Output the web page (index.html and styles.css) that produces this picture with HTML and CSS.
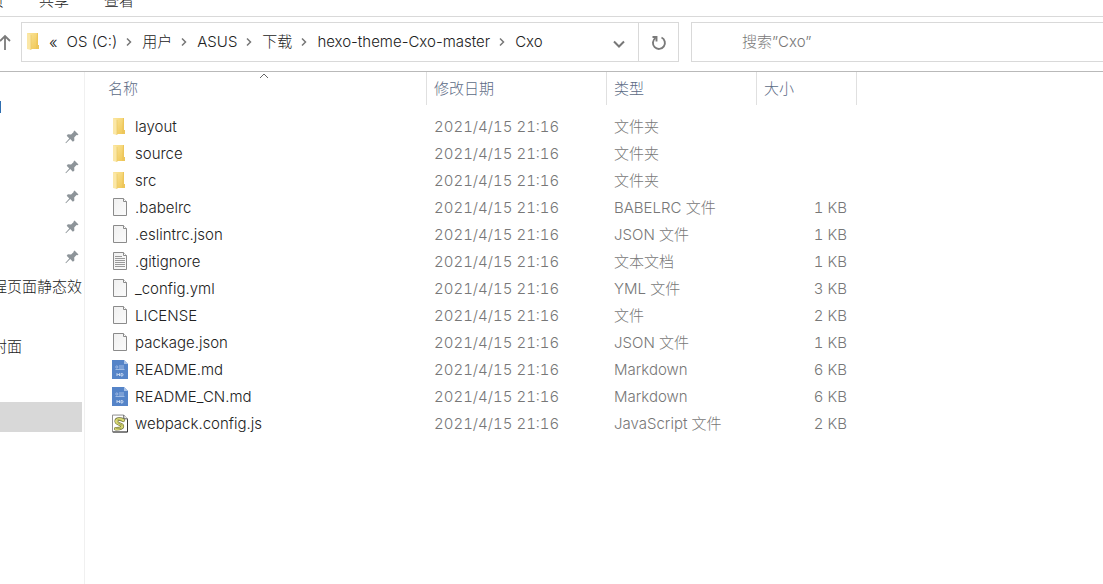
FILE: index.html
```html
<!DOCTYPE html>
<html lang="zh-CN">
<head>
<meta charset="utf-8">
<title>Cxo</title>
<link rel="stylesheet" href="styles.css">
</head>
<body>
<svg class="defs" aria-hidden="true">
  <defs>
    <linearGradient id="gold" x1="0" y1="0" x2="1" y2="1"><stop offset="0" stop-color="#fbe59a"/><stop offset="1" stop-color="#efc653"/></linearGradient>
    <linearGradient id="paper" x1="0" y1="0" x2="1" y2="1"><stop offset="0" stop-color="#f0f0f0"/><stop offset="1" stop-color="#fbfbfb"/></linearGradient>
  </defs>
  <symbol id="folder" viewBox="0 0 16 20">
    <path d="M1 1h11v12l1 1v3H2z" fill="url(#gold)"/>
    <path d="M1 1l4 2v15l-4-1z" fill="#fbe7a6"/>
    <path d="M5 3v15" stroke="#e9c866" stroke-width=".7"/>
    <path d="M11 1h1v12h1v4h-3z" fill="#edc65b"/>
  </symbol>
  <symbol id="file" viewBox="0 0 16 20">
    <path d="M1.500.500h10l3 3v14h-13z" fill="url(#paper)" stroke="#8b8b8b"/>
    <path d="M11.500.500v3h3" fill="#fff" stroke="#8b8b8b"/>
  </symbol>
  <symbol id="text" viewBox="0 0 16 20">
    <use href="#file"/>
    <path d="M3 4.500h7M3 6.500h10M3 8.500h10M3 10.500h10M3 12.500h10M3 14.500h10" stroke="#9a9a9a"/>
  </symbol>
  <symbol id="md" viewBox="0 0 16 20">
    <path d="M0 0h12l4 4v15H0z" fill="#5584c8"/>
    <path d="M12 0l4 4h-4z" fill="#a9c2e6"/>
    <path d="M7 6h5M3.500 9.500h9M7 8h5" stroke="#b4caeb" stroke-width=".8"/>
    <circle cx="4.800" cy="7" r="1.100" fill="none" stroke="#b4caeb" stroke-width=".7"/>
    <path d="M5 16v-2.500l1.200 1.500 1.300-1.500V16M9 13.500V16h.8a1.250 1.250 0 0 0 0-2.500z" fill="none" stroke="#d5e2f5" stroke-width=".9"/>
  </symbol>
  <symbol id="script" viewBox="0 0 17 20">
    <path d="M.5.500h12l4 4v14H.5z" fill="#fff" stroke="#888"/>
    <path d="M12.500.500v4h4" fill="#eee" stroke="#555"/>
    <path d="M16.500 5v13.500H1" fill="none" stroke="#333"/>
    <path d="M12 6C10 4.500 4.500 4 4.500 7.200s7 2.600 6.500 5.300-4 2.500-7 2.500" fill="none" stroke="#66673a" stroke-width="3.800" stroke-linecap="round"/>
    <path d="M12 6C10 4.500 4.500 4 4.500 7.200s7 2.600 6.500 5.300-4 2.500-7 2.500" fill="none" stroke="#d9da73" stroke-width="2.600" stroke-linecap="round"/>
    <path d="M6 5.500l4 .8M6 8.500l5 3M4 14.500h6" stroke="#8b8c45" stroke-width=".8"/>
  </symbol>
  <symbol id="pin" viewBox="0 0 14 14">
    <path d="M9.500.500l4 4-1.200.8-.8-.2-2.300 2.500.2 3-1.500 1.200-2.700-2.700L1 13.300l-.6-.5 3.900-4.400L1.700 5.700l1.200-1.500 3.200.2 2.600-2.300-.1-.9z" fill="#8d9499"/>
  </symbol>
  <symbol id="sep" viewBox="0 0 6 10"><path d="M1 1.500L4.500 5 1 8.500" fill="none" stroke="#777" stroke-width="1.500"/></symbol>
</svg>

<nav class="ribbon">
  <a class="tab tab-cut" href="#">主页</a>
  <a class="tab" href="#">共享</a>
  <a class="tab" href="#">查看</a>
</nav>

<header class="toolbar">
  <button class="up" aria-label="上移"><svg width="12" height="18" viewBox="0 0 12 18"><path d="M5 16V2M0 7l5-5 5 5" fill="none" stroke="#7a7a7a" stroke-width="1.800"/></svg></button>
  <div class="address">
    <svg class="address-icon" width="16" height="20"><use href="#folder"/></svg>
    <nav class="crumbs">
      <span class="more">«</span>
      <a href="#">OS (C:)</a><svg width="6" height="10"><use href="#sep"/></svg>
      <a href="#">用户</a><svg width="6" height="10"><use href="#sep"/></svg>
      <a href="#">ASUS</a><svg width="6" height="10"><use href="#sep"/></svg>
      <a href="#">下载</a><svg width="6" height="10"><use href="#sep"/></svg>
      <a href="#">hexo-theme-Cxo-master</a><svg width="6" height="10"><use href="#sep"/></svg>
      <a href="#">Cxo</a>
    </nav>
    <button class="history" aria-label="以前的位置"><svg width="12" height="8" viewBox="0 0 12 8"><path d="M1 1.500l5 5 5-5" fill="none" stroke="#777" stroke-width="2"/></svg></button>
    <button class="refresh" aria-label="刷新"><svg width="16" height="16" viewBox="0 0 16 16"><path d="M10.500 2.500A6 6 0 1 1 4.500 3" fill="none" stroke="#7a7a7a" stroke-width="1.900"/><path d="M1.500 2H5.500V6.500" fill="none" stroke="#7a7a7a" stroke-width="1.900"/></svg></button>
  </div>
  <input class="search" type="text" aria-label="搜索" placeholder="搜索”Cxo”">
</header>

<div class="content">
  <aside class="sidebar">
    <div class="side-item"><span class="marker"></span></div>
    <div class="side-item pinned"><svg width="14" height="14"><use href="#pin"/></svg></div>
    <div class="side-item pinned"><svg width="14" height="14"><use href="#pin"/></svg></div>
    <div class="side-item pinned"><svg width="14" height="14"><use href="#pin"/></svg></div>
    <div class="side-item pinned"><svg width="14" height="14"><use href="#pin"/></svg></div>
    <div class="side-item pinned"><svg width="14" height="14"><use href="#pin"/></svg></div>
    <div class="side-item"><span class="label">程页面静态效</span></div>
    <div class="side-item"></div>
    <div class="side-item"><span class="label">封面</span></div>
    <div class="side-item"></div>
    <div class="side-item selected"></div>
  </aside>
  <main class="files">
    <table>
      <colgroup><col class="c-name"><col class="c-date"><col class="c-type"><col class="c-size"></colgroup>
      <thead>
        <tr>
          <th class="sorted">名称<svg class="sort" width="10" height="6" viewBox="0 0 10 6"><path d="M1 5l4-4 4 4" fill="none" stroke="#666"/></svg></th>
          <th>修改日期</th><th>类型</th><th>大小</th>
        </tr>
      </thead>
      <tbody>
        <tr><td><span class="name"><svg width="16" height="20"><use href="#folder"/></svg>layout</span></td><td class="date">2021/4/15 21:16</td><td>文件夹</td><td></td></tr>
        <tr><td><span class="name"><svg width="16" height="20"><use href="#folder"/></svg>source</span></td><td class="date">2021/4/15 21:16</td><td>文件夹</td><td></td></tr>
        <tr><td><span class="name"><svg width="16" height="20"><use href="#folder"/></svg>src</span></td><td class="date">2021/4/15 21:16</td><td>文件夹</td><td></td></tr>
        <tr><td><span class="name"><svg width="16" height="20"><use href="#file"/></svg>.babelrc</span></td><td class="date">2021/4/15 21:16</td><td>BABELRC 文件</td><td>1 KB</td></tr>
        <tr><td><span class="name"><svg width="16" height="20"><use href="#file"/></svg>.eslintrc.json</span></td><td class="date">2021/4/15 21:16</td><td>JSON 文件</td><td>1 KB</td></tr>
        <tr><td><span class="name"><svg width="16" height="20"><use href="#text"/></svg>.gitignore</span></td><td class="date">2021/4/15 21:16</td><td>文本文档</td><td>1 KB</td></tr>
        <tr><td><span class="name"><svg width="16" height="20"><use href="#file"/></svg>_config.yml</span></td><td class="date">2021/4/15 21:16</td><td>YML 文件</td><td>3 KB</td></tr>
        <tr><td><span class="name"><svg width="16" height="20"><use href="#file"/></svg>LICENSE</span></td><td class="date">2021/4/15 21:16</td><td>文件</td><td>2 KB</td></tr>
        <tr><td><span class="name"><svg width="16" height="20"><use href="#file"/></svg>package.json</span></td><td class="date">2021/4/15 21:16</td><td>JSON 文件</td><td>1 KB</td></tr>
        <tr><td><span class="name"><svg width="16" height="20"><use href="#md"/></svg>README.md</span></td><td class="date">2021/4/15 21:16</td><td>Markdown</td><td>6 KB</td></tr>
        <tr><td><span class="name"><svg width="16" height="20"><use href="#md"/></svg>README_CN.md</span></td><td class="date">2021/4/15 21:16</td><td>Markdown</td><td>6 KB</td></tr>
        <tr><td><span class="name"><svg width="16" height="20"><use href="#script"/></svg>webpack.config.js</span></td><td class="date">2021/4/15 21:16</td><td>JavaScript 文件</td><td>2 KB</td></tr>
      </tbody>
    </table>
  </main>
</div>
</body>
</html>
```

FILE: styles.css
```css
* { box-sizing: border-box; }
body {
  margin: 0;
  min-height: 100vh;
  display: flex;
  flex-direction: column;
  background: #fff;
  color: #222;
  font: 300 15px/20px Inter, "Noto Sans CJK SC", sans-serif;
  overflow: hidden;
}
svg { flex: none; display: block; }
.defs { position: absolute; width: 0; height: 0; }
a { color: inherit; text-decoration: none; }
button { border: 0; padding: 0; background: none; display: flex; align-items: center; justify-content: center; }

.ribbon {
  display: flex;
  align-items: flex-end;
  gap: 35px;
  height: 17px;
  padding-bottom: 5px;
  border-bottom: 1px solid #d9d9d9;
  overflow: hidden;
}
.tab-cut { margin-left: -26px; }

.toolbar {
  display: flex;
  height: 55px;
  padding: 5px 0 9px;
  border-bottom: 1px solid #b9b9b9;
}
.up { width: 21px; justify-content: flex-start; padding-top: 2px; }
.address {
  flex: 0 0 658px;
  display: flex;
  align-items: center;
  border: 1px solid #d9d9d9;
}
.address-icon { margin-left: 4px; }
.crumbs { flex: 1; display: flex; align-items: center; gap: 9px; padding-left: 7px; white-space: nowrap; }
.crumbs svg { margin-right: 1px; }
.more { font-size: 16px; line-height: 18px; }
.history { width: 38px; height: 100%; padding-top: 3px; }
.refresh { width: 40px; height: 100%; border-left: 1px solid #d9d9d9; padding-top: 2px; }
.search {
  flex: 1;
  min-width: 0;
  margin-left: 12px;
  padding: 0 0 0 50px;
  border: 1px solid #d9d9d9;
  border-right: 0;
  border-radius: 0;
  background: #fff;
  font: inherit;
  color: #222;
}
.search::placeholder { color: #777; opacity: 1; }

.content { flex: 1; display: flex; }
.sidebar { flex: 0 0 85px; padding: 20px 2px 0 0; border-right: 1px solid #f0f0f0; }
.side-item { height: 30px; display: flex; align-items: center; overflow: hidden; white-space: nowrap; }
.pinned { justify-content: flex-end; padding-right: 3px; }
.marker { width: 1px; height: 12px; background: #2f6eb0; }
.label { margin-left: -8px; }
.selected { margin-top: 10px; background: #d8d8d8; }

.files { flex: 1; padding-left: 16px; }
table { width: 756px; border-collapse: separate; border-spacing: 0; table-layout: fixed; }
.c-name { width: 326px; }
.c-date { width: 180px; }
.c-type { width: 150px; }
.c-size { width: 100px; }
th {
  height: 33px;
  padding: 0 0 0 7px;
  border-right: 1px solid #e0e0e0;
  text-align: left;
  font-weight: 300;
  color: #5c6b85;
}
.sorted { position: relative; }
.sort { position: absolute; top: 1px; left: 50%; margin-left: -5px; }
tbody::before { content: ""; display: block; height: 8px; }
td { height: 27px; padding: 0 0 0 7px; color: #777; white-space: nowrap; }
td:first-child { color: #222; padding-left: 11px; }
td:last-child { text-align: right; padding-right: 10px; font-variant-numeric: tabular-nums; }
.date { font-variant-numeric: tabular-nums; }
.name { display: flex; align-items: center; gap: 7px; }
```
